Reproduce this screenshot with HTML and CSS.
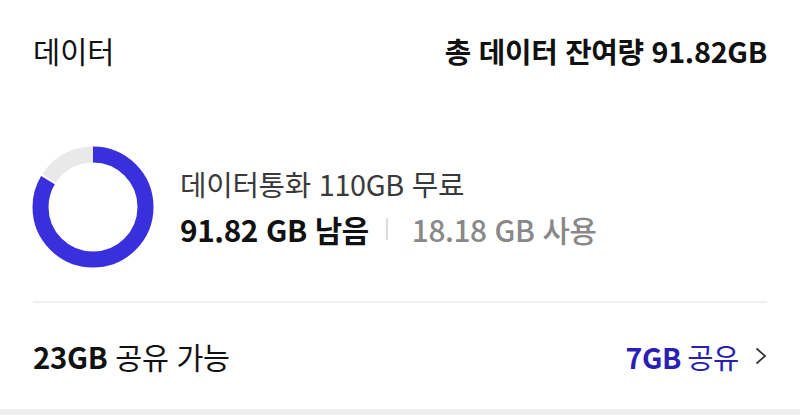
FILE: index.html
```html
<!DOCTYPE html>
<html lang="ko">
<head>
<meta charset="utf-8">
<link rel="stylesheet" href="styles.css">
</head>
<body>
<div class="page">
  <div class="header">
    <div class="title">데이터</div>
    <div class="total">총 데이터 잔여량 91.82GB</div>
  </div>
  <div class="usage">
    <svg class="donut" width="122" height="122" viewBox="0 0 122 122">
      <circle cx="61" cy="61" r="52.5" fill="none" stroke="#e9e9e9" stroke-width="16"
        stroke-dasharray="52.5 400" stroke-dashoffset="-277.3" transform="rotate(-90 61 61)"/>
      <circle cx="61" cy="61" r="52.5" fill="none" stroke="#3a2fdc" stroke-width="16"
        stroke-dasharray="275.3 400" transform="rotate(-90 61 61)"/>
    </svg>
    <div class="info">
      <div class="plan">데이터통화 110GB 무료</div>
      <div class="amounts">
        <span class="left">91.82 GB 남음</span>
        <span class="sep"></span>
        <span class="used">18.18 GB 사용</span>
      </div>
    </div>
  </div>
  <div class="divider"></div>
  <div class="share">
    <div class="avail"><b>23GB</b> 공유 가능</div>
    <div class="action"><b>7GB</b> 공유
      <svg class="chev" width="12" height="18" viewBox="0 0 12 18"><path d="M1.5 1.5 L10 9 L1.5 16.5" fill="none" stroke="#333" stroke-width="1.8"/></svg>
    </div>
  </div>
  <div class="band"></div>
</div>
</body>
</html>
```

FILE: styles.css
```css
* { box-sizing: border-box; }
html, body { margin: 0; padding: 0; background: #fff; }
body {
  font-family: "Noto Sans CJK KR", "Noto Sans", sans-serif;
  color: #111;
}
.page { width: 800px; }
.header {
  height: 100px;
  padding: 0 33px;
  display: flex;
  justify-content: space-between;
  align-items: center;
}
.title { font-size: 29.5px; font-weight: 400; }
.total { font-size: 28.8px; font-weight: 700; letter-spacing: -0.3px; }
.usage {
  margin-top: 46px;
  padding-left: 32px;
  display: flex;
  align-items: center;
}
.donut { display: block; }
.info {
  margin-left: 26px;
  display: flex;
  flex-direction: column;
}
.plan {
  font-size: 28.8px;
  color: #3a3a3a;
  line-height: 44px;
  letter-spacing: -0.3px;
}
.amounts {
  display: flex;
  align-items: center;
  line-height: 46px;
  font-size: 29.8px;
  letter-spacing: -0.4px;
}
.left { font-weight: 700; color: #111; }
.sep {
  width: 2px;
  height: 22px;
  background: #dedede;
  margin: 0 24px 0 17px;
}
.used { color: #888; font-weight: 500; }
.divider {
  margin: 33px 33px 0;
  height: 2px;
  background: #efefef;
}
.share {
  height: 106px;
  padding: 0 33px;
  display: flex;
  justify-content: space-between;
  align-items: center;
  letter-spacing: -0.3px;
}
.avail { font-size: 29.3px; }
.action { font-size: 28.5px; }
.avail b, .action b { font-weight: 700; }
.action {
  color: #2a1fb3;
  display: flex;
  align-items: center;
  gap: 6px;
}
.chev { display: block; margin-left: 10px; }
.band { height: 10px; background: #eeeeee; }
```
